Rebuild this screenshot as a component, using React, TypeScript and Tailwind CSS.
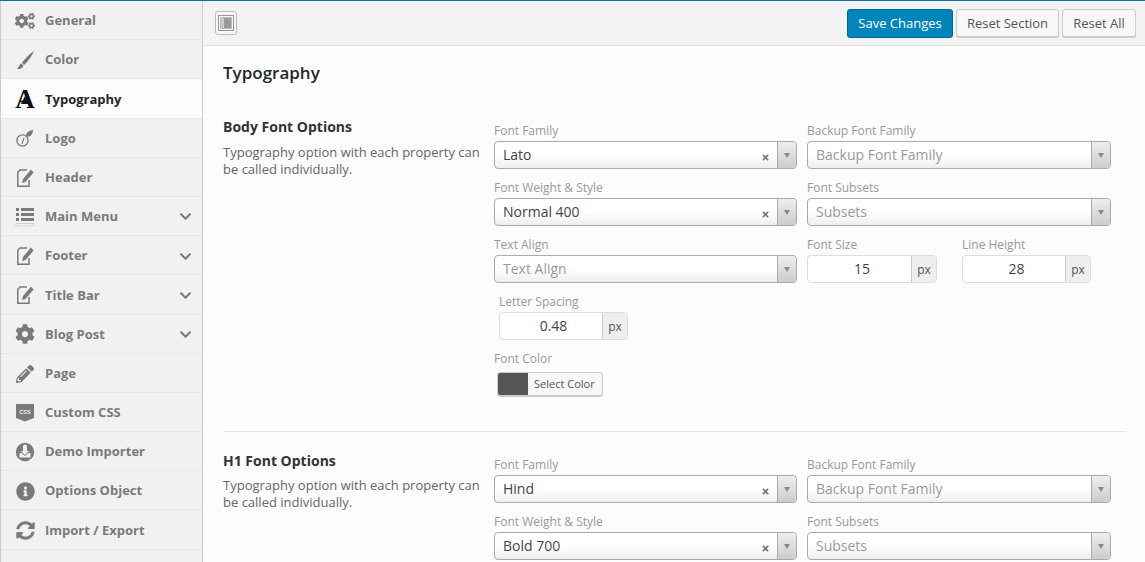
import React from "react";
import {
  FaChevronDown,
  FaCog,
  FaCogs,
  FaInfoCircle,
  FaPencilAlt,
  FaSyncAlt,
  FaTimes,
} from "react-icons/fa";

const BrushIcon = () => (
  <svg viewBox="0 0 20 20" className="h-[20px] w-[20px]" fill="currentColor">
    <path d="M19 1 C14.5 4 9.5 9 7 13 L9 15 C13 11.5 17 6 19 1 Z" />
    <path d="M6.3 13.6 C4 14.5 4 17.5 2 19 C5 19.5 8.5 18 8.3 15.5 Z" />
  </svg>
);

const EditIcon = () => (
  <svg viewBox="0 0 20 20" className="h-[20px] w-[20px]" fill="none" stroke="currentColor">
    <path d="M12 2 H5 L2.8 4.2 V18.2 H14 V12" strokeWidth="1.5" />
    <path d="M16 1.5 L18.6 4.5 L10.5 14 L7 15 L8 11 Z" fill="currentColor" stroke="none" />
  </svg>
);

const LogoIcon = () => (
  <svg viewBox="0 0 20 20" className="h-[20px] w-[20px]" fill="none" stroke="currentColor">
    <circle cx="7.5" cy="11.5" r="5.6" strokeWidth="1.3" />
    <path d="M11 7.5 C10.5 4 14 1.5 18 1 C18 5 15.5 8.5 11 7.5 Z" fill="currentColor" stroke="none" />
    <path d="M7 15 L9 9" strokeWidth="1.1" />
  </svg>
);

const ListIcon = () => (
  <svg viewBox="0 0 20 20" className="h-[20px] w-[20px]" fill="currentColor">
    <rect x="1" y="1" width="3" height="3" />
    <rect x="6" y="1" width="13" height="3" />
    <rect x="1" y="6" width="3" height="3" />
    <rect x="6" y="6" width="13" height="3" />
    <rect x="1" y="11" width="3" height="3" />
    <rect x="6" y="11" width="13" height="3" />
    <rect x="1" y="16.5" width="18" height="2.5" fill="none" stroke="currentColor" strokeOpacity="0.35" strokeWidth="0.8" />
  </svg>
);

const CssIcon = () => (
  <svg viewBox="0 0 20 20" className="h-[20px] w-[20px]">
    <path d="M1 1 H19 V15 L10 18.5 L1 15 Z" fill="currentColor" />
    <text x="10" y="11" textAnchor="middle" fontSize="5.6" fontWeight="700" fill="#f1f1f1" fontFamily="Liberation Sans, sans-serif">
      CSS
    </text>
  </svg>
);

const ImporterIcon = () => (
  <svg viewBox="0 0 20 20" className="h-[20px] w-[20px]" fill="currentColor">
    <circle cx="10" cy="10" r="9.2" />
    <path d="M8 4 a2 2 0 0 1 4 0 V8.5 H14 L10 12.5 L6 8.5 H8 Z" transform="translate(0 0.5)" fill="#f1f1f1" />
    <path d="M4.5 11 H6.5 L10 14 L13.5 11 H15.5 V15.5 H4.5 Z" fill="#f1f1f1" />
  </svg>
);

const TypeIcon = () => (
  <span className="relative w-[20px] text-center font-['Liberation_Serif',serif] text-[27px] leading-[20px] font-bold text-[#111]">
    A
    {/* the icon's A has no counter, so plug it */}
    <span className="absolute top-[7px] left-[6px] h-0 w-0 border-x-[4px] border-b-[8px] border-x-transparent border-b-[#111]" />
  </span>
);

const navItems: { label: string; icon: React.ReactNode; active?: boolean; more?: boolean }[] = [
  { label: "General", icon: <FaCogs className="h-[20px] w-[20px]" /> },
  { label: "Color", icon: <BrushIcon /> },
  { label: "Typography", icon: <TypeIcon />, active: true },
  { label: "Logo", icon: <LogoIcon /> },
  { label: "Header", icon: <EditIcon /> },
  { label: "Main Menu", icon: <ListIcon />, more: true },
  { label: "Footer", icon: <EditIcon />, more: true },
  { label: "Title Bar", icon: <EditIcon />, more: true },
  { label: "Blog Post", icon: <FaCog className="h-[20px] w-[20px]" />, more: true },
  { label: "Page", icon: <FaPencilAlt className="h-[18px] w-[18px]" /> },
  { label: "Custom CSS", icon: <CssIcon /> },
  { label: "Demo Importer", icon: <ImporterIcon /> },
  { label: "Options Object", icon: <FaInfoCircle className="h-[19px] w-[19px]" /> },
  { label: "Import / Export", icon: <FaSyncAlt className="h-[19px] w-[19px]" /> },
];

function Label({ children }: { children: React.ReactNode }) {
  return <div className="h-[16px] text-[12px] leading-[16px] text-[#999]">{children}</div>;
}

function Select({ value, placeholder, width }: { value?: string; placeholder: string; width: string }) {
  return (
    <div className={`flex h-[28px] items-stretch rounded-[4px] border border-[#aaa] bg-gradient-to-b from-white from-50% to-[#eee] ${width}`}>
      <div className={`flex-1 pl-[8px] text-[14px] leading-[26px] ${value ? "text-[#444]" : "text-[#999]"}`}>
        {value ?? placeholder}
      </div>
      {value && <FaTimes className="mr-[7px] mt-[11px] h-[9px] w-[9px] text-[#777]" />}
      <div className="flex w-[19px] items-center justify-center rounded-r-[4px] border-l border-[#aaa] bg-gradient-to-b from-[#eee] to-[#ccc]">
        <div className="h-0 w-0 border-x-[3.5px] border-t-[5px] border-x-transparent border-t-[#888]" />
      </div>
    </div>
  );
}

function Units({ value, width }: { value: string; width: string }) {
  return (
    <div className={`flex h-[28px] rounded-[4px] border border-[#ddd] bg-white ${width}`}>
      <div className="flex-1 pl-[5px] text-center text-[14px] leading-[26px] text-[#444]">{value}</div>
      <div className="w-[25px] rounded-r-[4px] border-l border-[#ccc] bg-[#eee] text-center text-[12px] leading-[27px] text-[#555]">
        px
      </div>
    </div>
  );
}

function Field({ label, children }: { label: string; children: React.ReactNode }) {
  return (
    <div>
      <Label>{label}</Label>
      <div className="mt-[2px]">{children}</div>
    </div>
  );
}

function SectionIntro({ title, gap }: { title: string; gap: string }) {
  return (
    <div className="w-[271px] shrink-0">
      <h3 className="text-[14px] leading-[20px] font-bold text-[#333]">{title}</h3>
      <p className={`w-[262px] text-[13px] leading-[17px] text-[#666] ${gap}`}>
        Typography option with each property can be called individually.
      </p>
    </div>
  );
}

export default function App() {
  return (
    <div className="flex h-[562px] w-[1145px] overflow-hidden border-t border-[#0073aa] bg-[#fcfcfc] font-['Open_Sans',sans-serif]">
      <nav className="w-[203px] shrink-0 border-x border-[#ccc] bg-[#f1f1f1]">
        {navItems.map((item) => (
          <div
            key={item.label}
            className={`flex h-[39.2px] items-center border-b border-[#e7e7e7] pt-[1.8px] pl-[14px] pr-[10px] ${
              item.active ? "bg-[#fcfcfc] text-[#23282d]" : "text-[#7a7a7a]"
            }`}
          >
            <div className="flex w-[20px] items-center justify-center">{item.icon}</div>
            <span className="ml-[10px] flex-1 text-[13px] font-bold">{item.label}</span>
            {item.more && <FaChevronDown className="h-[13px] w-[13px]" />}
          </div>
        ))}
      </nav>
      <main className="min-w-0 flex-1">
        <header className="flex h-[45px] items-center justify-between border-b border-[#e1e1e1] bg-[#f3f3f3] pl-[12px] pr-[9px]">
          <button className="flex h-[24px] w-[22px] items-center justify-center rounded-[3px] border border-[#bbb] bg-[#f7f7f7]">
            <svg viewBox="0 0 16 16" className="h-[16px] w-[16px]">
              <rect x="0.5" y="0.5" width="15" height="15" fill="none" stroke="#999" />
              <rect x="2.5" y="2.5" width="11" height="11" fill="none" stroke="#bbb" />
              <rect x="3" y="3" width="3" height="10" fill="#ccc" />
              <rect x="6" y="3" width="7" height="10" fill="#999" />
            </svg>
          </button>
          <div className="flex items-center gap-[3px]">
            <button className="h-[29px] w-[106px] rounded-[3px] border border-[#006799] bg-[#0085ba] pt-[1px] text-[13px] text-white">
              Save Changes
            </button>
            <button className="h-[28px] w-[103px] rounded-[3px] border border-[#ccc] bg-[#f7f7f7] pt-[1px] text-[13px] text-[#555] shadow-[0_1px_0_#ccc]">
              Reset Section
            </button>
            <button className="h-[28px] w-[74px] rounded-[3px] border border-[#ccc] bg-[#f7f7f7] pt-[1px] text-[13px] text-[#555] shadow-[0_1px_0_#ccc]">
              Reset All
            </button>
          </div>
        </header>

        <div className="pl-[20px] pr-[19px]">
          <h2 className="pt-[15px] text-[17px] leading-[24px] font-semibold text-[#23282d]">Typography</h2>

          <section className="mt-[32px] flex border-b border-[#e5e5e5] pb-[35px]">
            <SectionIntro title="Body Font Options" gap="mt-[7px]" />
            <div className="pt-[6px]">
              <div className="flex gap-[10px]">
                <Field label="Font Family"><Select value="Lato" placeholder="Font Family" width="w-[303px]" /></Field>
                <Field label="Backup Font Family"><Select placeholder="Backup Font Family" width="w-[304px]" /></Field>
              </div>
              <div className="mt-[11px] flex gap-[10px]">
                <Field label="Font Weight & Style"><Select value="Normal 400" placeholder="Font Weight" width="w-[303px]" /></Field>
                <Field label="Font Subsets"><Select placeholder="Subsets" width="w-[304px]" /></Field>
              </div>
              <div className="mt-[11px] flex gap-[10px]">
                <Field label="Text Align"><Select placeholder="Text Align" width="w-[303px]" /></Field>
                <Field label="Font Size"><Units value="15" width="w-[130px]" /></Field>
                <div className="ml-[15px]">
                  <Field label="Line Height"><Units value="28" width="w-[129px]" /></Field>
                </div>
              </div>
              <div className="mt-[11px] ml-[5px]">
                <Field label="Letter Spacing"><Units value="0.48" width="w-[129px]" /></Field>
              </div>
              <div className="mt-[11px]">
                <Label>Font Color</Label>
                <button className="mt-[5px] ml-[3px] flex h-[24px] w-[106px] overflow-hidden rounded-[3px] border border-[#ccc] bg-[#f7f7f7] text-left shadow-[0_1px_0_#ccc]">
                  <span className="h-full w-[30px] bg-[#555]" />
                  <span className="pl-[6px] text-[11px] leading-[22px] text-[#555]">Select Color</span>
                </button>
              </div>
            </div>
          </section>

          <section className="mt-[19px] flex">
            <SectionIntro title="H1 Font Options" gap="mt-[6px]" />
            <div className="pt-[6px]">
              <div className="flex gap-[10px]">
                <Field label="Font Family"><Select value="Hind" placeholder="Font Family" width="w-[303px]" /></Field>
                <Field label="Backup Font Family"><Select placeholder="Backup Font Family" width="w-[304px]" /></Field>
              </div>
              <div className="mt-[11px] flex gap-[10px]">
                <Field label="Font Weight & Style"><Select value="Bold 700" placeholder="Font Weight" width="w-[303px]" /></Field>
                <Field label="Font Subsets"><Select placeholder="Subsets" width="w-[304px]" /></Field>
              </div>
            </div>
          </section>
        </div>
      </main>
    </div>
  );
}
